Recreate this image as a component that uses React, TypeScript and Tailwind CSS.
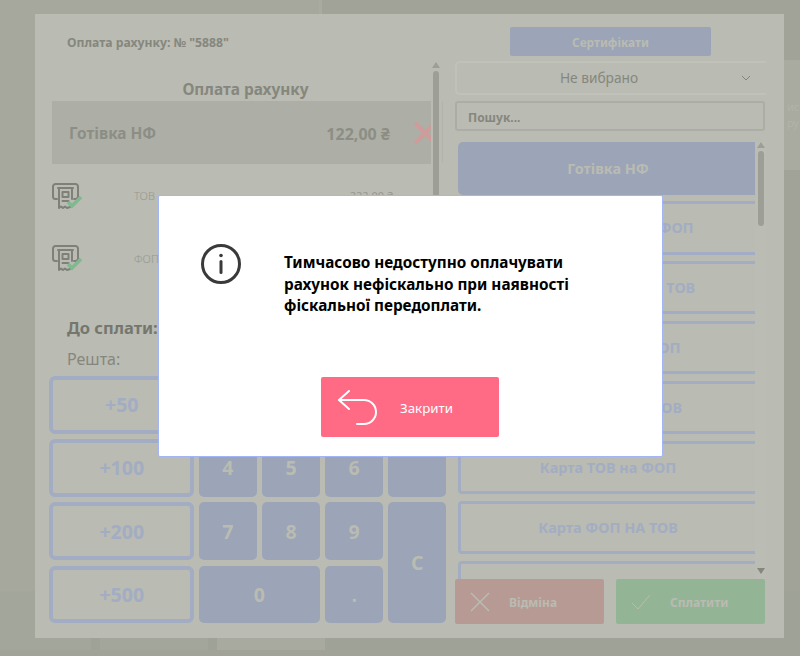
const keys = ["1", "2", "3", "", "4", "5", "6", ""];
const topups = ["+50", "+100", "+200", "+500"];
const methods = [
  "Безготівка ТОВ на ФОП",
  "Безготівка ФОП НА ТОВ",
  "Картка ТОВ на ФОП",
  "Картка ФОП НА ТОВ",
  "Карта ТОВ на ФОП",
  "Карта ФОП НА ТОВ",
  "",
];

function ReceiptIcon() {
  return (
    <svg width="32" height="27" viewBox="0 0 32 27" fill="none" className="shrink-0">
      <g stroke="#7f8179" strokeWidth="2" strokeLinejoin="round" strokeLinecap="round">
        <path d="M5 16H3.500A2.500 2.500 0 0 1 1 13.500V3.500A2.500 2.500 0 0 1 3.500 1h20A2.500 2.500 0 0 1 26 3.500v10a2.500 2.500 0 0 1-2.500 2.500H22" />
        <path d="M6 5h15" />
        <path d="M7 5v20l2-1.500 2 1.500 2-1.500 2 1.500 3-1" />
        <path d="M20 5v11" />
        <rect x="10.500" y="9" width="6" height="5" />
        <path d="M10.500 18h6" />
      </g>
      <path d="M16 19l4 4 9-9" stroke="#7fb98f" strokeWidth="3.500" />
    </svg>
  );
}

function PaidRow({ name, sum }: { name: string; sum: string }) {
  return (
    <div className="flex items-center h-[62.5px]">
      <ReceiptIcon />
      <span className="ml-[50px] text-[11px] font-light text-[#96988f]">{name}</span>
      <span className="ml-auto mr-[38px] text-[11px] text-[#96988f]">{sum}</span>
    </div>
  );
}

function Scrollbar({ thumb, tall }: { thumb: string; tall: string }) {
  return (
    <div className={`flex w-[9px] flex-col items-center ${tall}`}>
      <div className="h-0 w-0 border-x-[4px] border-b-[6px] border-x-transparent border-b-[#9d9f96]" />
      <div className={`mt-[3px] w-[6px] rounded-[3px] bg-[#9d9f96] ${thumb}`} />
      <div className="mt-auto h-0 w-0 border-x-[4px] border-t-[6px] border-x-transparent border-t-[#85877e]" />
    </div>
  );
}

export default function App() {
  return (
    <div className="relative h-[656px] w-[800px] overflow-hidden bg-[#a1a399] font-['Noto_Sans',sans-serif]">
      {/* page behind the payment window */}
      <div className="flex h-[591px]">
        <div className="w-[322px] border-r-[3px] border-[#a9aba1] bg-[#a6a89e]" />
        <div className="flex-1 pt-[60px]">
          <div className="ml-auto h-[110px] w-[16px] overflow-hidden whitespace-nowrap bg-[#a9aba1] pl-[3px] pt-[39px] text-[11px] leading-[16px] text-[#b1b3a9]">
            ист
            <br />
            ру
          </div>
        </div>
      </div>
      <div className="flex h-[59px] gap-[9px] bg-[#9fa297]">
        <div className="w-[91px] bg-[#a3a69b]" />
        <div className="w-[108px] bg-[#a3a69b]" />
        <div className="w-[108px] bg-[#a8aa9f]" />
      </div>

      {/* payment window */}
      <div className="absolute left-[35px] top-[14px] flex h-[624px] w-[749px] bg-[#babbb2]">
        <div className="w-[412px] pl-[14px]">
          <div className="pl-[18px] pt-[22px] text-[12.200px] font-bold leading-[14px] text-[#85877e]">
            Оплата рахунку: № "5888"
          </div>
          <div className="flex h-[268px] pl-[3px] pt-[12px]">
            <div className="w-[379px]">
              <div className="mt-[18px] h-[21px] pl-[8px] text-center text-[15.400px] font-bold leading-[20px] text-[#85877e]">
                Оплата рахунку
              </div>
              <div className="flex h-[63px] items-center overflow-hidden bg-[#adaea5] pl-[17px] text-[15.400px] font-bold text-[#8c8e85]">
                <span className="pt-[3px]">Готівка НФ</span>
                <span className="ml-auto pt-[3px] text-[16px]">122,00 ₴</span>
                <svg width="22" height="22" viewBox="0 0 22 22" fill="none" stroke="#cf9b9b" strokeWidth="4" className="ml-[24px] mr-[-5px] shrink-0">
                  <path d="M1 1l20 20M21 1L1 21" />
                </svg>
              </div>
              <div className="pt-[1px]">
                <PaidRow name="ТОВ" sum="222,00 ₴" />
                <PaidRow name="ФОП" sum="" />
              </div>
            </div>
            <Scrollbar thumb="h-[204px]" tall="h-[254px]" />
            <div className="ml-[2px] mt-[39px] h-[62px] w-px bg-[#b2b3aa]" />
          </div>
          <div className="pl-[18px] text-[16.500px] font-bold leading-[20px] text-[#75776f]">До сплати:</div>
          <div className="pl-[18px] pt-[10px] text-[16px] leading-[22px] text-[#85877e]">Решта:</div>
          <div className="mt-[6px] grid grid-cols-[144.500px_57.800px_57.800px_57.800px_57.800px] grid-rows-[57.800px_57.800px_57.800px_57.800px] gap-[5.400px] text-[19.500px] font-bold text-[#babbb2]">
            {topups.map((t, i) => (
              <div
                key={t}
                className="col-start-1 flex items-center justify-center rounded-[6px] border-[4px] border-[#a2adc3] pl-[1px] text-[#a2adc3]"
                style={{ gridRowStart: i + 1 }}
              >
                {t}
              </div>
            ))}
            {keys.map((k, i) => (
              <div key={i} className="flex items-center justify-center rounded-[5px] bg-[#9ba5b7]">
                {k}
              </div>
            ))}
            {["7", "8", "9"].map((k) => (
              <div key={k} className="flex items-center justify-center rounded-[5px] bg-[#9ba5b7]">
                {k}
              </div>
            ))}
            <div className="row-span-2 flex items-center justify-center rounded-[5px] bg-[#9ba5b7]">C</div>
            <div className="col-span-2 flex items-center justify-center rounded-[5px] bg-[#9ba5b7]">0</div>
            <div className="flex items-center justify-center rounded-[5px] bg-[#9ba5b7]">.</div>
          </div>
        </div>

        <div className="flex w-[337px] flex-col pl-[8px]">
          <div className="ml-[55px] mt-[13px] flex h-[29px] w-[201px] items-center justify-center rounded-[2px] bg-[#9ba5b7] pt-[2px] text-[11.800px] font-bold text-[#babbb2]">
            Сертифікати
          </div>
          <div className="mt-[5px] flex h-[34px] w-[311px] items-center rounded-l-[5px] border-2 border-r-0 border-[#c0c1b8] text-[13.700px] text-[#85877e]">
            <span className="flex-1 text-center">Не вибрано</span>
            <svg width="10" height="6" viewBox="0 0 10 6" fill="none" className="mr-[15px]">
              <path d="M1 1l4 4 4-4" stroke="#85877e" />
            </svg>
          </div>
          <div className="mt-[6px] flex h-[30px] w-[310px] items-center rounded-[3px] border-2 border-[#acada4] pl-[11px] pt-[3px] text-[12px] font-bold text-[#85877e]">
            Пошук...
          </div>
          <div className="mt-[11px] flex h-[437px] w-[311px] justify-between overflow-hidden">
            <div className="w-[299px] pl-[3px]">
              <div className="flex h-[52.700px] w-[310px] items-center justify-center rounded-[5px] bg-[#9ba5b7] pr-[10px] text-[14.400px] font-bold text-[#babbb2]">
                Готівка НФ
              </div>
              {methods.map((m, i) => (
                <div
                  key={i}
                  className="mt-[6.700px] flex h-[53.200px] w-[310px] items-center justify-center rounded-[4px] border-[3px] border-[#a2adc3] pr-[10px] text-[14.400px] font-bold text-[#a2adc3]"
                >
                  {m}
                </div>
              ))}
            </div>
            <div className="bg-[#bbbcb4] px-[1px]">
              <Scrollbar thumb="h-[75px]" tall="h-[432px]" />
            </div>
          </div>
          <div className="flex w-[310px] justify-between">
            <div className="flex h-[45px] w-[149px] items-center rounded-[2px] bg-[#b89a94] pl-[15px] text-[12px] font-bold text-[#babbb2]">
              <svg width="20" height="20" viewBox="0 0 20 20" fill="none" stroke="#babbb2" strokeWidth="1.500">
                <path d="M1 1l18 18M19 1L1 19" />
              </svg>
              <span className="ml-[19px] pt-[3px]">Відміна</span>
            </div>
            <div className="flex h-[45px] w-[149px] items-center rounded-[2px] bg-[#93b596] pl-[15px] text-[12px] font-bold text-[#babbb2]">
              <svg width="20" height="16" viewBox="0 0 20 16" fill="none" stroke="#babbb2">
                <path d="M1 9l6 6L19 1" />
              </svg>
              <span className="ml-[19px] pt-[3px]">Сплатити</span>
            </div>
          </div>
        </div>
      </div>

      {/* message dialog */}
      <div className="absolute left-[158px] top-[195px] flex h-[262px] w-[505px] flex-col rounded-[2px] border border-[#a3b5f5] bg-white">
        <div className="flex pl-[41px] pt-[47px]">
          <svg width="42" height="42" viewBox="0 0 42 42" fill="none" stroke="#3a3a3a" strokeWidth="3">
            <circle cx="21" cy="21" r="18.500" />
            <path d="M21 18.500v11" strokeLinecap="round" />
            <circle cx="21" cy="12.500" r="1.800" fill="#3a3a3a" stroke="none" />
          </svg>
          <p className="ml-[42px] w-[310px] pt-[9px] text-[15.300px] font-bold leading-[21.500px] text-black">
            Тимчасово недоступно оплачувати рахунок нефіскально при наявності фіскальної передоплати.
          </p>
        </div>
        <div className="ml-[162px] mt-auto mb-[19px] flex h-[60px] w-[178px] items-center rounded-[2px] bg-[#ff6a85] pl-[16px] text-[13.300px] text-white">
          <svg width="42" height="38" viewBox="0 0 42 38" fill="none" stroke="white" strokeWidth="2" strokeLinecap="round" strokeLinejoin="round" className="mt-[2px]">
            <path d="M12 2L2 11l10 9" />
            <path d="M2 11h25a12 12 0 0 1 0 24h-7" />
          </svg>
          <span className="ml-[21px] pt-[3px]">Закрити</span>
        </div>
      </div>
    </div>
  );
}
